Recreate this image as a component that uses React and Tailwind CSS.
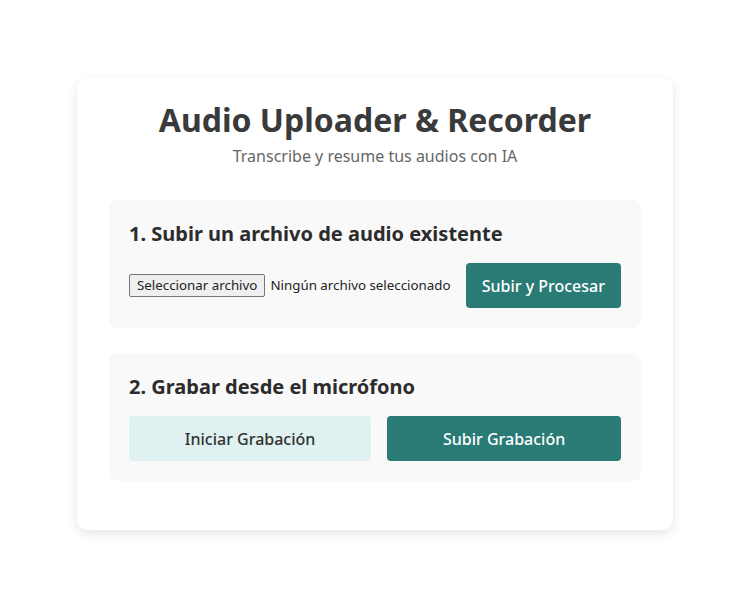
export default function App() {
  return (
    <div className="min-h-screen bg-white flex items-center justify-center" style={{ fontFamily: '"Noto Sans", sans-serif' }}>
      <div className="w-[596px] mr-1 bg-white rounded-[10px] shadow-[0_4px_12px_rgba(0,0,0,0.1)] px-8 pt-[20px] pb-[49px]">
        <h1 className="text-[32px] font-bold text-[#3a3a3a] text-center leading-[1.362] mb-[5px]">
          Audio Uploader &amp; Recorder
        </h1>
        <p className="text-[16px] text-[#666] text-center leading-[1.362] mb-[32px]">
          Transcribe y resume tus audios con IA
        </p>

        <div className="bg-[#f9f9f9] rounded-[8px] p-5 mb-[25px]">
          <h2 className="text-[20px] font-bold text-[#2c2c2c] leading-[1.362] mb-4">
            1. Subir un archivo de audio existente
          </h2>
          <div className="flex items-center justify-between">
            <div className="flex items-center text-[13.333px] text-[#222]">
              <span className="border border-[#767676] bg-[#efefef] rounded-[2px] px-[7px] h-[23px] flex items-center leading-none">
                Seleccionar archivo
              </span>
              <span className="ml-[5px]">Ningún archivo seleccionado</span>
            </div>
            <button className="bg-[#2a7a76] text-white text-[16px] rounded-[4px] h-[45px] px-4 font-medium">
              Subir y Procesar
            </button>
          </div>
        </div>

        <div className="bg-[#f9f9f9] rounded-[8px] p-5">
          <h2 className="text-[20px] font-bold text-[#2c2c2c] leading-[1.362] mb-4">
            2. Grabar desde el micrófono
          </h2>
          <div className="flex gap-4">
            <button className="flex-auto bg-[#dff1f0] text-[#333] text-[16px] rounded-[4px] h-[45px] px-4 font-medium">
              Iniciar Grabación
            </button>
            <button className="flex-auto bg-[#2a7a76] text-white text-[16px] rounded-[4px] h-[45px] px-4 font-medium">
              Subir Grabación
            </button>
          </div>
        </div>
      </div>
    </div>
  );
}
